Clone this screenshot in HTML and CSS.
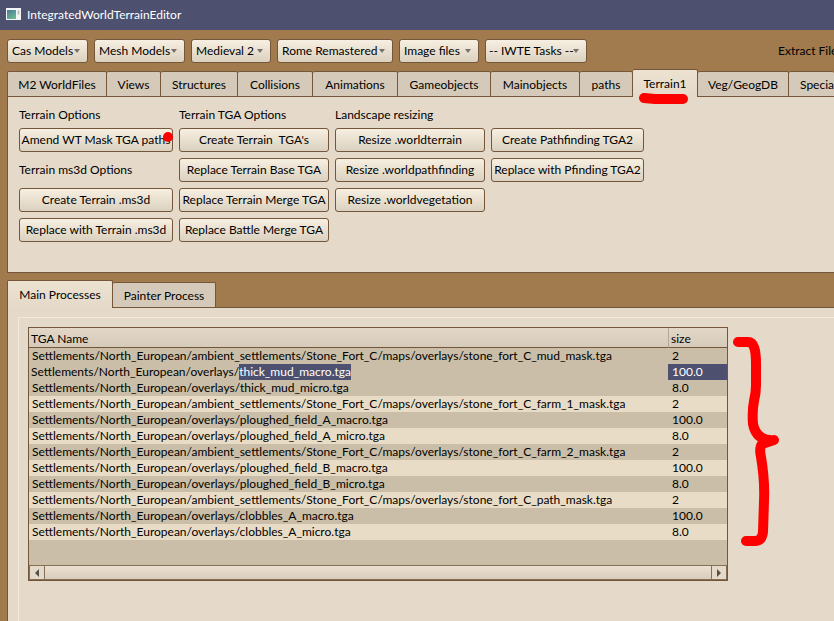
FILE: index.html
```html
<!DOCTYPE html>
<html lang="en">
<head>
<meta charset="utf-8">
<title>IntegratedWorldTerrainEditor</title>
<link rel="stylesheet" href="styles.css">
</head>
<body>
<header class="titlebar">
  <svg class="app-icon" width="15" height="12" viewBox="0 0 15 12" aria-hidden="true">
    <defs><linearGradient id="app-fill" x1="0" y1="0" x2="0.6" y2="1"><stop offset="0" stop-color="#4a7a9c"/><stop offset="1" stop-color="#6cb793"/></linearGradient></defs>
    <rect width="15" height="12" fill="#f4f5f5"/>
    <rect x="1" y="2" width="9" height="9" fill="url(#app-fill)"/>
    <rect x="11" y="2" width="3" height="5" fill="#dde3df"/>
    <rect x="12" y="3" width="1" height="3" fill="#a9bdb0"/>
  </svg>
  <h1>IntegratedWorldTerrainEditor</h1>
</header>
<main class="workspace">
  <div class="toolbar">
    <span class="menu menu-cas"><select aria-label="Cas Models"><option>Cas Models</option></select><svg width="6" height="4" viewBox="0 0 6 4"><path d="M0 0h6L3 4z"/></svg></span>
    <span class="menu menu-mesh"><select aria-label="Mesh Models"><option>Mesh Models</option></select><svg width="6" height="4" viewBox="0 0 6 4"><path d="M0 0h6L3 4z"/></svg></span>
    <span class="menu"><select aria-label="Medieval 2"><option>Medieval 2</option></select><svg width="6" height="4" viewBox="0 0 6 4"><path d="M0 0h6L3 4z"/></svg></span>
    <span class="menu menu-rome"><select aria-label="Rome Remastered"><option>Rome Remastered</option></select><svg width="6" height="4" viewBox="0 0 6 4"><path d="M0 0h6L3 4z"/></svg></span>
    <span class="menu"><select aria-label="Image files"><option>Image files</option></select><svg width="6" height="4" viewBox="0 0 6 4"><path d="M0 0h6L3 4z"/></svg></span>
    <span class="menu menu-tasks"><select aria-label="IWTE Tasks"><option>-- IWTE Tasks --</option></select><svg width="6" height="4" viewBox="0 0 6 4"><path d="M0 0h6L3 4z"/></svg></span>
    <span class="extract">Extract File</span>
  </div>

  <div class="tabs tabs-main" role="tablist">
    <button role="tab">M2 WorldFiles</button>
    <button role="tab">Views</button>
    <button role="tab">Structures</button>
    <button role="tab">Collisions</button>
    <button role="tab">Animations</button>
    <button role="tab">Gameobjects</button>
    <button role="tab">Mainobjects</button>
    <button role="tab">paths</button>
    <button role="tab" class="active" aria-selected="true">Terrain1
      <svg class="underline" width="50" height="12" viewBox="0 0 50 12" aria-hidden="true"><path d="M5 5L16 6H44"/></svg>
    </button>
    <button role="tab">Veg/GeogDB</button>
    <button role="tab" class="clipped">Specia</button>
  </div>
  <section class="panel options">
    <div class="group group-wide">
      <h2>Terrain Options</h2>
      <button class="btn">Amend WT Mask TGA paths<i class="dot"></i></button>
      <h2>Terrain ms3d Options</h2>
      <button class="btn">Create Terrain .ms3d</button>
      <button class="btn">Replace with Terrain .ms3d</button>
    </div>
    <div class="group">
      <h2>Terrain TGA Options</h2>
      <button class="btn">Create Terrain&nbsp; TGA's</button>
      <button class="btn">Replace Terrain Base TGA</button>
      <button class="btn">Replace Terrain Merge TGA</button>
      <button class="btn">Replace Battle Merge TGA</button>
    </div>
    <div class="group">
      <h2>Landscape resizing</h2>
      <button class="btn">Resize .worldterrain</button>
      <button class="btn">Resize .worldpathfinding</button>
      <button class="btn">Resize .worldvegetation</button>
    </div>
    <div class="group group-bare">
      <button class="btn">Create Pathfinding TGA2</button>
      <button class="btn">Replace with Pfinding TGA2</button>
    </div>
  </section>

  <div class="tabs tabs-process" role="tablist">
    <button role="tab" class="active" aria-selected="true">Main Processes</button>
    <button role="tab">Painter Process</button>
  </div>
  <section class="panel process">
    <div class="frame">
      <div class="table-box">
        <table>
          <thead><tr><th>TGA Name</th><th class="size">size</th></tr></thead>
          <tbody>
            <tr><td>Settlements/North_European/ambient_settlements/Stone_Fort_C/maps/overlays/stone_fort_C_mud_mask.tga</td><td>2</td></tr>
            <tr class="editing"><td>Settlements/North_European/overlays/<mark>thick_mud_macro.tga</mark></td><td class="selected">100.0</td></tr>
            <tr><td>Settlements/North_European/overlays/thick_mud_micro.tga</td><td>8.0</td></tr>
            <tr><td>Settlements/North_European/ambient_settlements/Stone_Fort_C/maps/overlays/stone_fort_C_farm_1_mask.tga</td><td>2</td></tr>
            <tr><td>Settlements/North_European/overlays/ploughed_field_A_macro.tga</td><td>100.0</td></tr>
            <tr><td>Settlements/North_European/overlays/ploughed_field_A_micro.tga</td><td>8.0</td></tr>
            <tr><td>Settlements/North_European/ambient_settlements/Stone_Fort_C/maps/overlays/stone_fort_C_farm_2_mask.tga</td><td>2</td></tr>
            <tr><td>Settlements/North_European/overlays/ploughed_field_B_macro.tga</td><td>100.0</td></tr>
            <tr><td>Settlements/North_European/overlays/ploughed_field_B_micro.tga</td><td>8.0</td></tr>
            <tr><td>Settlements/North_European/ambient_settlements/Stone_Fort_C/maps/overlays/stone_fort_C_path_mask.tga</td><td>2</td></tr>
            <tr><td>Settlements/North_European/overlays/clobbles_A_macro.tga</td><td>100.0</td></tr>
            <tr><td>Settlements/North_European/overlays/clobbles_A_micro.tga</td><td>8.0</td></tr>
          </tbody>
        </table>
        <div class="scrollbar">
          <button aria-label="Scroll left"><svg width="4" height="8" viewBox="0 0 4 8"><path d="M4 0v8L0 4z"/></svg></button>
          <span class="thumb"></span>
          <button aria-label="Scroll right"><svg width="4" height="8" viewBox="0 0 4 8"><path d="M0 0v8L4 4z"/></svg></button>
        </div>
        <svg class="brace" width="48" height="212" viewBox="0 0 48 212" aria-hidden="true">
          <path d="M6 6H16C22 6 24 14 24 28V49Q24 57 22 65Q20 75 21 88Q24 103 38 104M42 104L30 108Q27 112 29 121Q33 145 32 165L31 196Q30 205 23 205H14"/>
        </svg>
      </div>
    </div>
  </section>
</main>
</body>
</html>
```
FILE: styles.css
```css
* { box-sizing: border-box; }

html, body { height: 100%; }

body {
  margin: 0;
  display: flex;
  flex-direction: column;
  overflow: hidden;
  background: #a17b4e;
  color: #000;
  font: 12px/16px Lato, "Noto Sans", sans-serif;
}

button, select, h1, h2, th { font: inherit; color: inherit; margin: 0; }

button, th, td, h1, h2, .extract { white-space: nowrap; }

.titlebar {
  flex: none;
  display: flex;
  align-items: center;
  gap: 6px;
  height: 30px;
  padding: 0 6px;
  background: #4d506e;
  color: #fff;
}

.app-icon { margin-bottom: 2px; }

.workspace {
  flex: 1;
  display: flex;
  flex-direction: column;
  min-height: 0;
  padding-left: 7px;
}

.toolbar {
  display: flex;
  gap: 6px;
  padding: 9px 0;
}

.menu {
  position: relative;
  flex: none;
  width: 80px;
  height: 24px;
}

.menu-cas { width: 81px; }
.menu-mesh { width: 91px; }
.menu-rome { width: 116px; }
.menu-tasks { width: 102px; }

.menu select {
  appearance: none;
  width: 100%;
  height: 100%;
  padding: 0 0 0 4px;
}

.menu svg {
  position: absolute;
  right: 8px;
  top: 10px;
  fill: #76716a;
}

.menu-tasks select { padding-left: 3px; }

.menu select, .btn {
  border: 1px solid #74573a;
  border-radius: 3px;
  background: linear-gradient(#f7efe1, #dbd1c0);
}

.extract {
  margin-left: auto;
  width: 56px;
  overflow: hidden;
  line-height: 24px;
}

.tabs {
  display: flex;
  align-items: flex-end;
  height: 27px;
  position: relative;
}

.tabs button {
  position: relative;
  flex: none;
  height: 25px;
  padding: 2px 0 0;
  border: 1px solid #74573a;
  border-left-width: 0;
  border-bottom: 0;
  border-radius: 2px 2px 0 0;
  background: #d5cab9;
}

.tabs button:first-child { border-left-width: 1px; }

.tabs button.active {
  height: 28px;
  margin-bottom: -1px;
  padding-top: 0;
  background: linear-gradient(#ede2d0, #e5daca);
}

.tabs-main {
  display: grid;
  grid-template-columns: 100px 54px 77px 75px 85px 93px 89px 53px 65px 91px 1fr;
  margin-top: -3px;
}

.tabs .clipped {
  min-width: 0;
  padding-left: 11px;
  border-right: 0;
  text-align: left;
  overflow: hidden;
}

.tabs-process { margin-top: 7px; }
.tabs-process button { width: 103px; }
.tabs-process .active { width: 106px; }

.underline {
  position: absolute;
  left: 6px;
  top: 23px;
  fill: none;
  stroke: #f00;
  stroke-width: 10px;
  stroke-linecap: round;
  stroke-linejoin: round;
}

.panel {
  border: 1px solid #74573a;
  border-right: 0;
  background: #e5daca;
}

.options {
  display: flex;
  gap: 6px;
  height: 177px;
  padding: 11px;
}

.group {
  display: flex;
  flex-direction: column;
  gap: 6px;
  width: 150px;
}

.group-wide { width: 154px; }

.group-bare {
  width: 153px;
  padding-top: 20px;
}

.group h2 { line-height: 24px; }
.group h2:first-child { line-height: 14px; }

.btn {
  position: relative;
  height: 24px;
  padding: 0;
}

.dot {
  position: absolute;
  right: -1px;
  top: 3px;
  width: 10px;
  height: 10px;
  border-radius: 50%;
  background: #f00;
}

.process {
  flex: 1;
  padding: 9px 0 0 10px;
  border-bottom: 0;
}

.frame {
  height: 100%;
  padding: 9px;
  border: 1px solid #f5ead9;
  border-right: 0;
  border-bottom: 0;
}

.table-box {
  position: relative;
  width: 700px;
  border: 1px solid #74573a;
  background: #cabea8;
}

table {
  width: 100%;
  margin-bottom: 25px;
  border-collapse: separate;
  border-spacing: 0;
  table-layout: fixed;
}

th {
  height: 20px;
  padding: 2px 2px 0;
  border-bottom: 1px solid #74573a;
  background: linear-gradient(#e3d8c7, #d6cbba);
  text-align: left;
}

.size {
  width: 59px;
  border-left: 1px solid #b3a896;
}

td {
  height: 16px;
  padding: 0 3px;
  line-height: 16px;
}

td + td { padding-left: 4px; }

tbody tr:nth-child(2n + 4) { background: #e8dcc6; }

.editing td:first-child { padding-left: 2px; }

mark, .selected {
  background: #4d506e;
  color: #fff;
}

mark { display: inline-block; }

.scrollbar {
  display: flex;
  height: 15px;
  border: 1px solid #857055;
  background: #857055;
  gap: 1px;
}

.scrollbar button {
  display: grid;
  place-items: center;
  width: 14px;
  padding: 0;
  border: 0;
  background: #e5daca;
}

.scrollbar svg { fill: #575046; }

.thumb {
  flex: 1;
  background: linear-gradient(#ece1d0, #d9cebd);
}

.brace {
  position: absolute;
  left: 703px;
  top: 8px;
  fill: none;
  stroke: #f00;
  stroke-width: 10px;
  stroke-linecap: round;
  stroke-linejoin: round;
}
```
